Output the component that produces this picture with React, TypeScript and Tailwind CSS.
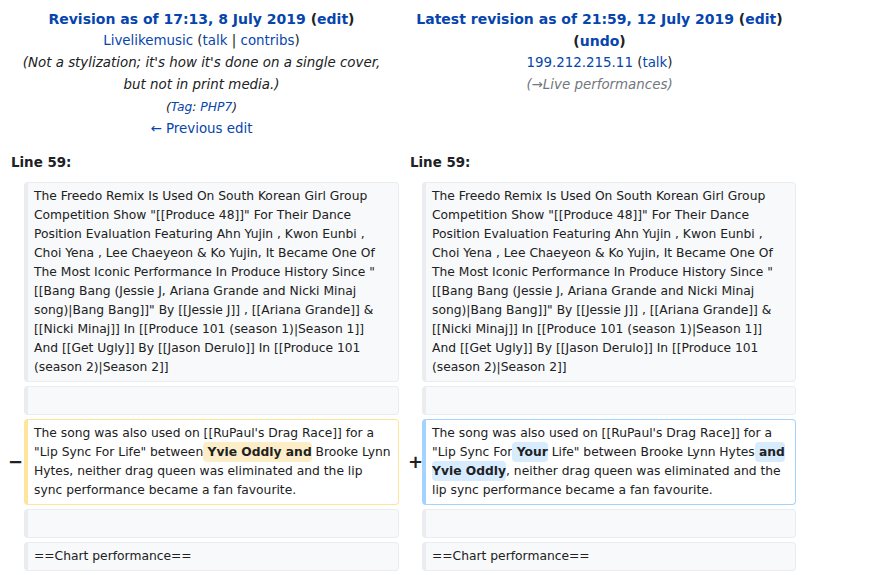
import * as React from "react";

const link = "text-[#0645ad]";

function Ctx({ lines }: { lines?: string[] }) {
  return (
    <div className="bg-[#f8f9fa] border border-l-4 border-[#eaecf0] rounded-[4px] px-[6px] py-[4px] text-[12.3px] leading-[19px] min-h-[29px]">
      {lines?.map((l, i) => (
        <div key={i} className="whitespace-nowrap">
          {l}
        </div>
      ))}
    </div>
  );
}

const contextLines = [
  "The Freedo Remix Is Used On South Korean Girl Group",
  'Competition Show "[[Produce 48]]" For Their Dance',
  "Position Evaluation Featuring Ahn Yujin , Kwon Eunbi ,",
  "Choi Yena , Lee Chaeyeon & Ko Yujin, It Became One Of",
  'The Most Iconic Performance In Produce History Since "',
  "[[Bang Bang (Jessie J, Ariana Grande and Nicki Minaj",
  'song)|Bang Bang]]" By [[Jessie J]] , [[Ariana Grande]] &',
  "[[Nicki Minaj]] In [[Produce 101 (season 1)|Season 1]]",
  "And [[Get Ugly]] By [[Jason Derulo]] In [[Produce 101",
  "(season 2)|Season 2]]",
];

const chg = "no-underline font-bold rounded-[4px] py-[3px]";

export default function App() {
  return (
    <div className="w-[874px] h-[575px] overflow-hidden bg-white text-[#202122] font-['DejaVu_Sans',sans-serif]">
      <div className="grid grid-cols-[16px_375px_15px_374px] gap-x-[4px] gap-y-[4px] pl-[4px] pt-[8px]">
        {/* revision headers */}
        <div className="col-span-2 text-center text-[13.4px] leading-[22px] mb-[8px]">
          <div className="font-bold text-[14px]">
            <span className={link}>Revision as of 17:13, 8 July 2019</span> (<span className={link}>edit</span>)
          </div>
          <div>
            <span className={link}>Livelikemusic</span> (<span className={link}>talk</span> | <span className={link}>contribs</span>)
          </div>
          <div className="italic">
            (Not a stylization; it's how it's done on a single cover,
            <br />
            but not in print media.)
          </div>
          <div className="italic text-[12.3px]">
            (<span className={link}>Tag</span>: <span className={link}>PHP7</span>)
          </div>
          <div className={link}>← Previous edit</div>
        </div>
        <div className="col-span-2 text-center text-[13.4px] leading-[22px] mb-[8px]">
          <div className="font-bold text-[14px]">
            <span className={link}>Latest revision as of 21:59, 12 July 2019</span> (<span className={link}>edit</span>)
            <br />
            (<span className={link}>undo</span>)
          </div>
          <div>
            <span className={link}>199.212.215.11</span> (<span className={link}>talk</span>)
          </div>
          <div className="italic text-[#72777d]">(→Live performances)</div>
        </div>

        {/* line numbers */}
        <div className="col-span-2 font-bold text-[13.4px] leading-[22px] pl-[7px] mb-[4px]">Line 59:</div>
        <div className="col-span-2 font-bold text-[13.4px] leading-[22px] pl-[7px] mb-[4px]">Line 59:</div>

        {/* context */}
        <div />
        <Ctx lines={contextLines} />
        <div />
        <Ctx lines={contextLines} />

        <div />
        <Ctx />
        <div />
        <Ctx />

        {/* changed line */}
        <div className="flex items-center justify-end font-bold text-[18px] leading-none mr-[-3px]">−</div>
        <div className="bg-white border border-l-4 border-[#ffe49c] rounded-[4px] px-[6px] py-[4px] text-[12.3px] leading-[19px]">
          <div className="whitespace-nowrap">The song was also used on [[RuPaul's Drag Race]] for a</div>
          <div className="whitespace-nowrap">
            "Lip Sync For Life" between<del className={`${chg} bg-[#feeec8]`}> Yvie Oddly and</del> Brooke Lynn
          </div>
          <div className="whitespace-nowrap">Hytes, neither drag queen was eliminated and the lip</div>
          <div className="whitespace-nowrap">sync performance became a fan favourite.</div>
        </div>
        <div className="flex items-center justify-end font-bold text-[18px] leading-none mr-[-5px]">+</div>
        <div className="bg-white border border-l-4 border-[#a3d3ff] rounded-[4px] px-[6px] py-[4px] text-[12.3px] leading-[19px]">
          <div className="whitespace-nowrap">The song was also used on [[RuPaul's Drag Race]] for a</div>
          <div className="whitespace-nowrap">
            "Lip Sync For<ins className={`${chg} bg-[#d8ecff]`}> Your</ins> Life" between Brooke Lynn Hytes
            <ins className={`${chg} bg-[#d8ecff]`}> and</ins>
          </div>
          <div className="whitespace-nowrap">
            <ins className={`${chg} bg-[#d8ecff]`}>Yvie Oddly</ins>, neither drag queen was eliminated and the
          </div>
          <div className="whitespace-nowrap">lip sync performance became a fan favourite.</div>
        </div>

        <div />
        <Ctx />
        <div />
        <Ctx />

        <div />
        <Ctx lines={["==Chart performance=="]} />
        <div />
        <Ctx lines={["==Chart performance=="]} />
      </div>
    </div>
  );
}
